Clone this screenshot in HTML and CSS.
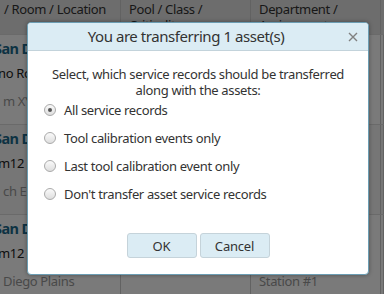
FILE: index.html
```html
<!DOCTYPE html>
<html lang="en">
<head>
  <meta charset="UTF-8">
  <title>Transfer assets</title>
  <link rel="stylesheet" href="styles.css">
</head>
<body>
  <div class="grid">
    <div class="head">
      <div class="cell c1">/ Room / Location</div>
      <div class="cell c2">Pool / Class /<br>Criticality</div>
      <div class="cell c3">Department /<br>Assignment</div>
      <div class="cell c4"></div>
    </div>
    <div class="row">
      <div class="cell c1"><b>San Diego</b><span>no Road 14</span><i>m XYZ 1</i></div>
      <div class="cell c2"></div>
      <div class="cell c3"></div>
      <div class="cell c4"></div>
    </div>
    <div class="row alt">
      <div class="cell c1"><b>San Diego</b><span>m12</span><i>ch E2</i></div>
      <div class="cell c2"></div>
      <div class="cell c3"></div>
      <div class="cell c4"></div>
    </div>
    <div class="row">
      <div class="cell c1"><b>San Diego</b><span>m12</span><i>Diego Plains</i></div>
      <div class="cell c2"></div>
      <div class="cell c3"><span></span><span></span><i>Station #1</i></div>
      <div class="cell c4"></div>
    </div>
  </div>

  <div class="overlay"></div>

  <div class="dialog">
    <div class="dialog-title">
      You are transferring 1 asset(s)
      <svg class="close" width="10" height="10" viewBox="0 0 10 10">
        <path d="M1 1L9 9M9 1L1 9" stroke="#808080" stroke-width="1.4"/>
      </svg>
    </div>
    <div class="dialog-body">
      <p class="question">Select, which service records should be transferred<br>along with the assets:</p>
      <ul class="choices">
        <li><span class="radio checked"></span>All service records</li>
        <li><span class="radio"></span>Tool calibration events only</li>
        <li><span class="radio"></span>Last tool calibration event only</li>
        <li><span class="radio"></span>Don't transfer asset service records</li>
      </ul>
      <div class="buttons">
        <button>OK</button>
        <button>Cancel</button>
      </div>
    </div>
  </div>
</body>
</html>
```

FILE: styles.css
```css
body {
  margin: 0;
  width: 384px;
  height: 294px;
  overflow: hidden;
  font-family: "Noto Sans", sans-serif;
  letter-spacing: -0.35px;
  color: #333;
  background: #fff;
}
.grid {
  width: 384px;
}
.head, .row {
  display: grid;
  grid-template-columns: 121px 130px 130px 3px;
}
.head {
  height: 34px;
  background: #e4e4e4;
  font-size: 13px;
  line-height: 16px;
  overflow: hidden;
}
.head .cell {
  padding: 1px 8px 0;
}
.head .c1 {
  padding-left: 4px;
}
.row {
  height: 89px;
  border-top: 1px solid #ddd;
}
.row.alt {
  background: #f6f6f6;
}
.cell {
  border-right: 1px solid #ccc;
  font-size: 13px;
  white-space: nowrap;
  overflow: hidden;
}
.row .cell {
  display: flex;
  flex-direction: column;
  padding-top: 3px;
}
.row .c1 {
  margin-left: -2px;
  padding-left: 0;
}
.row .c3 {
  padding-left: 8px;
}
.row b {
  height: 25px;
  margin-left: -4px;
  line-height: 20px;
  color: #1c6a8c;
  font-size: 14.5px;
  letter-spacing: -0.6px;
}
.row span {
  height: 25px;
  line-height: 20px;
  color: #222;
}
.row i {
  font-style: normal;
  line-height: 26px;
  color: #999;
  padding-left: 5px;
}
.row .c3 i {
  padding-left: 0;
}
.overlay {
  position: absolute;
  left: 0;
  top: 0;
  width: 384px;
  height: 294px;
  background: rgba(0, 0, 0, 0.52);
}
.dialog {
  position: absolute;
  left: 27px;
  top: 22px;
  width: 340px;
  height: 251px;
  background: #fff;
  border: 1px solid #6b9db3;
  border-radius: 4px;
  box-shadow: 0 0 4px rgba(0, 0, 0, 0.35);
  overflow: hidden;
}
.dialog-title {
  position: relative;
  height: 27px;
  padding-right: 24px;
  line-height: 27px;
  background: #dbecf4;
  border-bottom: 1px solid #c3d3db;
  text-align: center;
  font-size: 15px;
  letter-spacing: -0.45px;
  color: #333;
}
.close {
  position: absolute;
  right: 10px;
  top: 9px;
}
.dialog-body {
  padding: 15px 0 0;
  font-size: 13px;
}
.question {
  margin: 0;
  text-align: center;
  line-height: 16px;
}
.choices {
  list-style: none;
  margin: -2px 0 0;
  padding: 0 0 0 16px;
}
.choices li {
  display: flex;
  align-items: center;
  height: 28px;
}
.radio {
  width: 10px;
  height: 10px;
  margin-right: 8px;
  border: 1px solid #aaa;
  border-radius: 50%;
  background: linear-gradient(#fafafa, #dedede);
  display: flex;
  align-items: center;
  justify-content: center;
}
.radio.checked::after {
  content: "";
  width: 4px;
  height: 4px;
  border-radius: 50%;
  background: #555;
}
.buttons {
  display: flex;
  justify-content: center;
  gap: 3px;
  margin-top: 25px;
}
button {
  width: 70px;
  height: 25px;
  font-family: inherit;
  font-size: 13px;
  letter-spacing: -0.2px;
  color: #333;
  background: #dbecf4;
  border: 1px solid #c5d3da;
  border-radius: 3px;
}
```
